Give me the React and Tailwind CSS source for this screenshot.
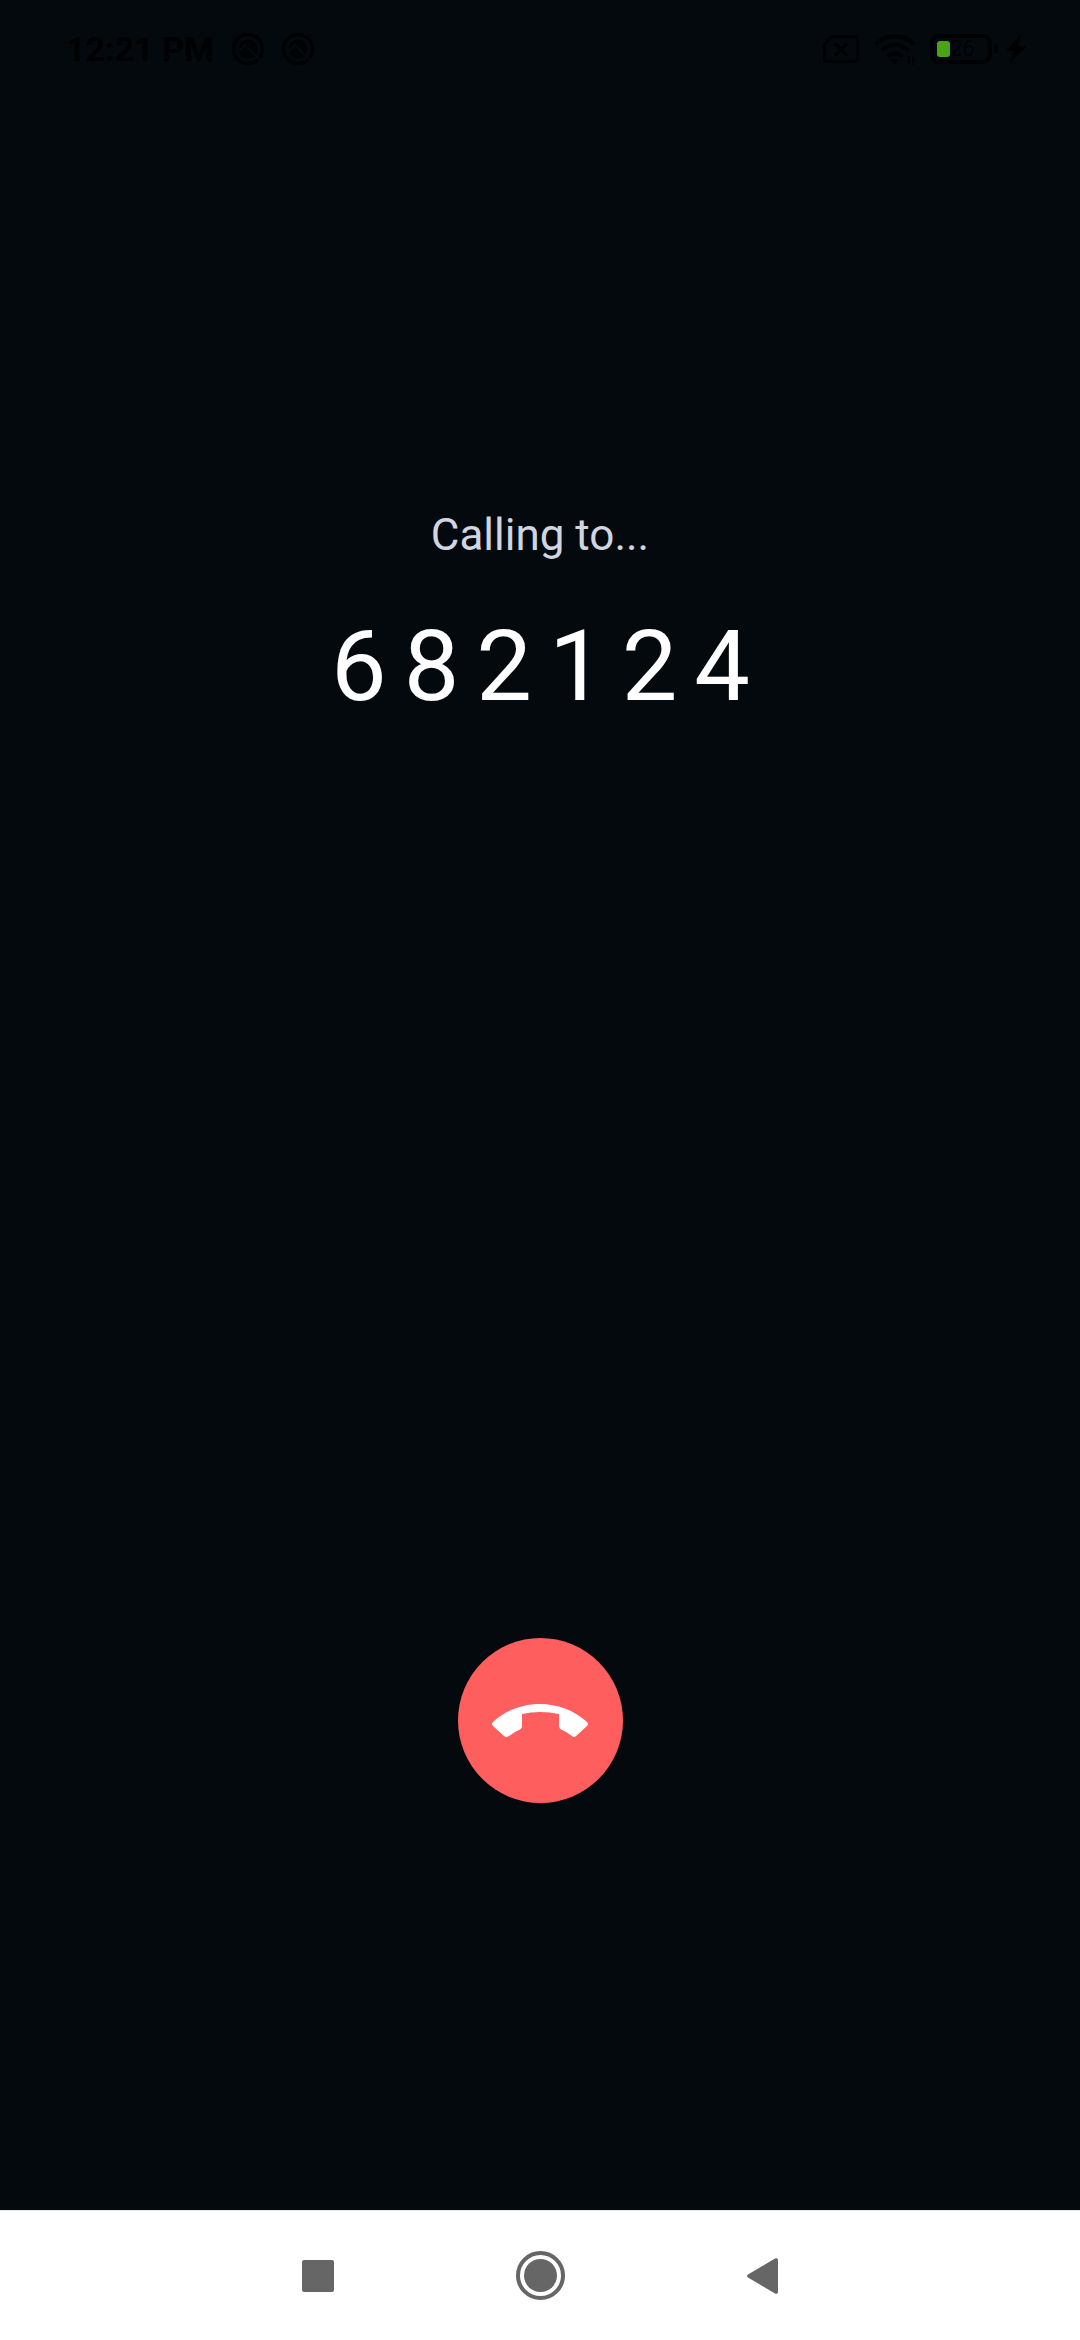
const INK = '#000103';

function QuickMark() {
  return (
    <svg viewBox="0 0 34 34" className="size-[34px]" fill="none" aria-hidden="true">
      <circle cx="17" cy="17" r="14.500" stroke={INK} strokeWidth="3.500" />
      <circle cx="17" cy="17" r="9.500" fill={INK} />
      <path d="M7 20l7-7L30 29" stroke="#03090d" strokeWidth="2.500" />
    </svg>
  );
}

function StatusBar() {
  return (
    <header className="flex h-[98px] items-center justify-between pr-[54px] pl-[66px] text-[#000103]">
      <div className="flex items-center">
        <time className="text-[34px] leading-10 font-bold">12:21 PM</time>
        <div className="ml-[17px] flex gap-4">
          <QuickMark />
          <QuickMark />
        </div>
      </div>
      <div className="flex items-center">
        <svg viewBox="0 0 36 28" className="h-7 w-9" fill="none" stroke={INK} strokeWidth="3" aria-label="No SIM card">
          <path d="M9 1.500H33a1.500 1.500 0 0 1 1.500 1.500V25a1.500 1.500 0 0 1-1.500 1.500H3A1.500 1.500 0 0 1 1.500 25V9z" strokeLinejoin="round" />
          <path d="M12.500 9l11 11M23.500 9l-11 11" strokeLinecap="round" />
        </svg>
        <svg viewBox="0 0 44 34" className="ml-[15px] h-[34px] w-11" fill="none" stroke={INK} strokeWidth="4" aria-label="Wi-Fi">
          <path d="M2 12a27 27 0 0 1 38 0M8 18.500a18 18 0 0 1 26 0M14 24.500a10 10 0 0 1 14 0" />
          <path d="M17 28a6 6 0 0 1 8 0l-4 4z" fill={INK} stroke="none" />
          <path d="M36 24v9l-4-4.500h2.500V24zM38 33v-9l4 4.500h-2.500V33z" fill={INK} stroke="none" />
        </svg>
        <div className="ml-3 flex h-[30px] w-[62px] items-center rounded-[9px] border-4 border-[#000103] pl-[3px]">
          <span className="h-4 w-[13px] rounded-[3px] bg-[#49a418]" />
          <span className="text-[22px] leading-[22px]">26</span>
        </div>
        <span className="ml-0.5 h-2.5 w-1 rounded-r-sm bg-[#000103]" />
        <svg viewBox="0 0 20 30" className="ml-2 h-[30px] w-5" fill={INK} aria-label="Charging">
          <path d="M15.500 0L0 17h8L3.500 30L20 12.500h-8z" />
        </svg>
      </div>
    </header>
  );
}

function NavBar() {
  return (
    <nav className="flex h-[130px] items-center justify-center gap-[174px] border-t border-[#e8e8e8] bg-white text-[#666]">
      <button type="button" aria-label="Recent apps" className="flex size-12 items-center justify-center">
        <span className="size-8 rounded-xs bg-current" />
      </button>
      <button type="button" aria-label="Home" className="flex size-[49px] items-center justify-center rounded-full border-4 border-current">
        <span className="size-[33px] rounded-full bg-current" />
      </button>
      <button type="button" aria-label="Back" className="flex size-12 items-center justify-center">
        <svg viewBox="0 0 31 36" className="h-9 w-[31px]" fill="currentColor">
          <path d="M1 16.500L28 .500Q31-.500 31 2V34Q31 36.500 28 35.500L1 19.500Q-1 18 1 16.500z" />
        </svg>
      </button>
    </nav>
  );
}

export default function App() {
  return (
    <div className="flex min-h-screen flex-col bg-[#03090d] font-[Roboto,sans-serif]">
      <StatusBar />
      <main className="flex flex-1 flex-col items-center justify-between pt-[411px] pb-[407px]">
        <div className="text-center">
          <p className="text-[44px] leading-[52px] text-[#d1d5e0]">Calling to...</p>
          <h1 className="mt-[45px] pl-[18px] text-[99px] leading-[120px] tracking-[17px] text-white">682124</h1>
        </div>
        <button type="button" aria-label="End call" className="flex size-[165px] items-center justify-center rounded-full bg-[#ff5e5e]">
          <svg viewBox="0 0 96 33" className="h-[33px] w-24" fill="#fff">
            <path d="M1 18C27-6 69-6 95 18Q97 20 95 22L84 32Q82 34 80 32Q75 28 69 25.500Q67 24.500 67 22V10Q48 6 30 10V22Q30 24.500 28 25.500Q22 28 17 32Q14 34 12 32L1 22Q-1 20 1 18z" />
          </svg>
        </button>
      </main>
      <NavBar />
    </div>
  );
}
